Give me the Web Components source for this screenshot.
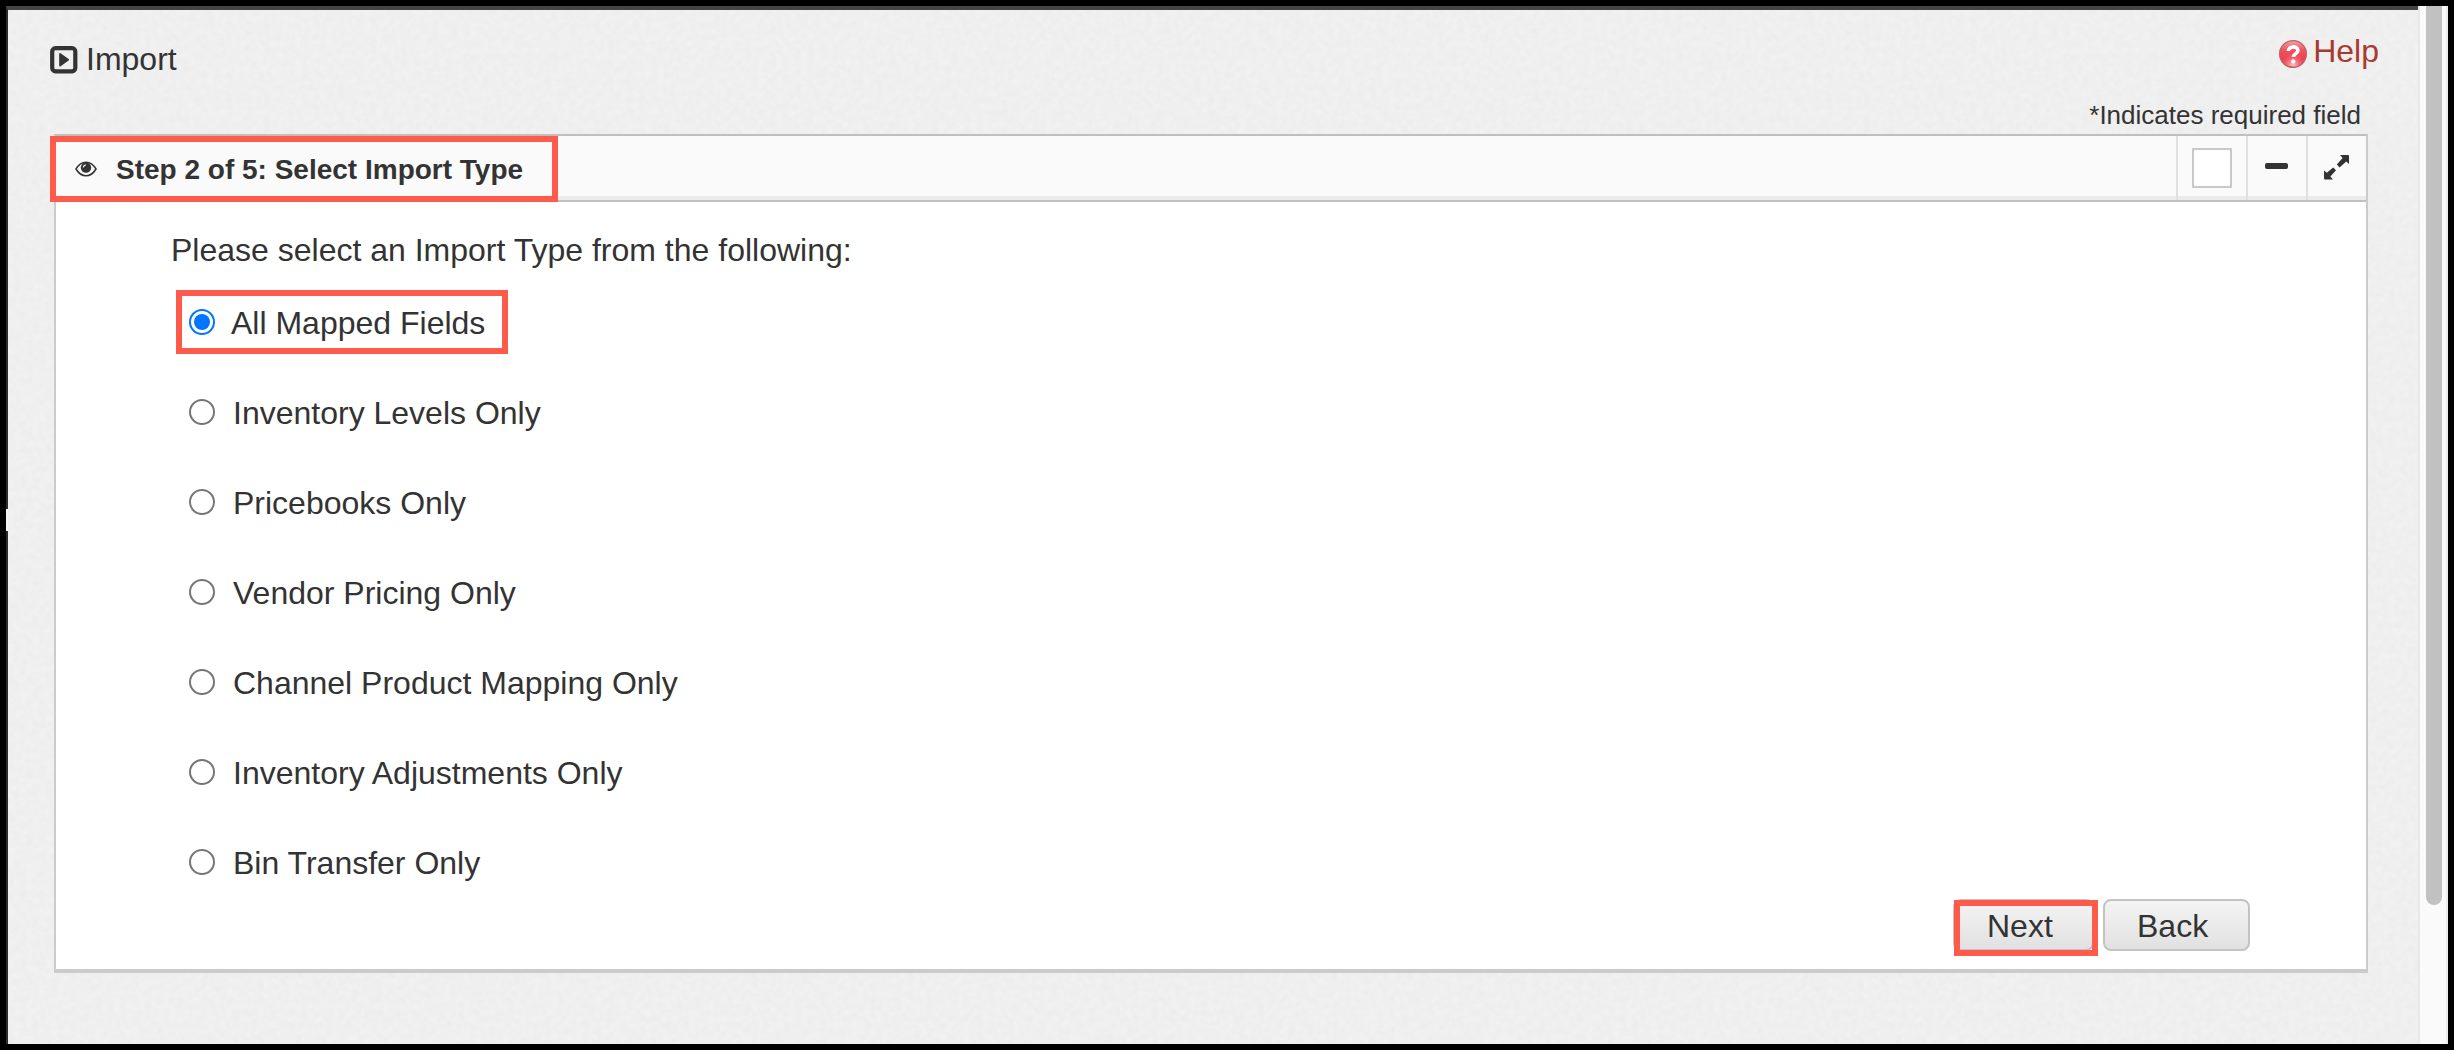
<!DOCTYPE html>
<html lang="en">
<head>
<meta charset="utf-8">
<title>Import</title>
<style>
    *{
        box-sizing:border-box;
    }
    body{
        margin:0;
        width:2454px;
        height:1050px;
        overflow:hidden;
        background:#000;
        font-family:"Liberation Sans", Arial, sans-serif;
        font-size:32px;
        color:#333;
    }
</style>
</head>
<body>
<app-shell>
    <page-heading>Import</page-heading>
    <help-link slot="help">Help</help-link>
    <required-note>*Indicates required field</required-note>
    <step-panel>
        <span slot="title">Step 2 of 5: Select Import Type</span>
        <span slot="intro">Please select an Import Type from the following:</span>
        <radio-option checked>All Mapped Fields</radio-option>
        <radio-option>Inventory Levels Only</radio-option>
        <radio-option>Pricebooks Only</radio-option>
        <radio-option>Vendor Pricing Only</radio-option>
        <radio-option>Channel Product Mapping Only</radio-option>
        <radio-option>Inventory Adjustments Only</radio-option>
        <radio-option>Bin Transfer Only</radio-option>
        <form-button slot="actions" marked>Next</form-button>
        <form-button slot="actions">Back</form-button>
    </step-panel>
</app-shell>

<script>
class BaseElement extends HTMLElement {
    constructor(){
        super();
        this.attachShadow({mode:'open'});
    }
    connectedCallback(){
        const template = document.createElement('template');
        template.innerHTML = `<style>*{box-sizing:border-box;}${this.getStyles()}</style>${this.getTemplate()}`;
        this.shadowRoot.replaceChildren(template.content.cloneNode(true));
    }
}

/* window frame, paper background and scrollbar */
class AppShell extends BaseElement {
    getTemplate(){
        return `
            <div class="page">
                <svg class="paper" width="2410" height="1034">
                    <filter id="grain" x="0" y="0" width="100%" height="100%">
                        <feTurbulence type="fractalNoise" baseFrequency=".16" numOctaves="3" seed="4"/>
                        <feColorMatrix values="0 0 0 0 0  0 0 0 0 0  0 0 0 0 0  .03 0 0 0 -.007"/>
                    </filter>
                    <rect width="2410" height="1034" filter="url(#grain)"/>
                </svg>
                <slot name="help"></slot>
                <slot></slot>
                <i class="notch"></i>
            </div>
            <div class="track"><div class="thumb"></div></div>
        `;
    }
    getStyles(){
        return `
            :host{
                display:flex;
                height:1050px;
                padding:6px;
            }
            .page{
                position:relative;
                z-index:0;
                width:2412px;
                height:1038px;
                border-top:4px solid #454443;
                border-left:2px solid #2e2c2a;
                background:#f1f1f1;
                padding:0 50px 0 46px;
            }
            .paper{
                position:absolute;
                left:0;
                top:0;
                z-index:-1;
            }
            ::slotted(help-link){
                float:right;
                margin:9px -11px 0 0;
            }
            .notch{
                position:absolute;
                left:-2px;
                top:499px;
                width:2px;
                height:22px;
                background:#f4f4f4;
            }
            .track{
                width:30px;
                height:1038px;
                background:#fafafa;
                border-left:2px solid #e8e8e8;
                border-right:2px solid #ededed;
                padding-left:6px;
            }
            .thumb{
                width:16px;
                height:899px;
                background:#c1c1c1;
                border-radius:0 0 8px 8px;
            }
        `;
    }
}

class PageHeading extends BaseElement {
    getTemplate(){
        return `
            <svg width="28" height="28" viewBox="0 0 28 28">
                <rect x="2.2" y="2.2" width="23.1" height="23.1" rx="3.2" fill="none" stroke="#333" stroke-width="4.2"/>
                <path d="M9.2 8.2Q9.2 6.6 10.6 7.3L18.6 13Q19.6 13.8 18.6 14.6L10.6 20.3Q9.2 21 9.2 19.4Z" fill="#333"/>
            </svg>
            <span><slot></slot></span>
        `;
    }
    getStyles(){
        return `
            :host{
                display:flex;
                height:83px;
                padding-top:36px;
            }
            svg{
                margin-left:-4px;
            }
            span{
                margin:-5px 0 0 8px;
                line-height:36px;
            }
        `;
    }
}

class HelpLink extends BaseElement {
    getTemplate(){
        return `
            <svg width="28" height="28" viewBox="0 0 28 28">
                <defs>
                    <linearGradient id="ball" x1="0" y1="0" x2="0" y2="1">
                        <stop offset="0" stop-color="#eea3a9"/>
                        <stop offset=".35" stop-color="#ec5563"/>
                        <stop offset=".7" stop-color="#ee3d4b"/>
                        <stop offset="1" stop-color="#d0525a"/>
                    </linearGradient>
                    <radialGradient id="glow" cx=".5" cy=".95" r=".5">
                        <stop offset="0" stop-color="#ffc3c6"/>
                        <stop offset="1" stop-color="#ff6b76" stop-opacity="0"/>
                    </radialGradient>
                </defs>
                <circle cx="14" cy="14" r="13.4" fill="url(#ball)" stroke="#c25f66" stroke-width="1.2"/>
                <circle cx="14" cy="14" r="12.6" fill="url(#glow)"/>
                <path d="M9.4 11C9.6 5.6 18.9 5.6 18.9 10.4C18.9 13.6 14.6 13.6 14.4 17" fill="none" stroke="#fff" stroke-width="3.6"/>
                <circle cx="14.3" cy="21.4" r="2.2" fill="#fff"/>
            </svg>
            <span><slot></slot></span>
        `;
    }
    getStyles(){
        return `
            :host{
                display:flex;
                height:36px;
                line-height:36px;
                color:#a93a30;
            }
            svg{
                margin-top:21px;
                flex:none;
            }
            span{
                margin:14px 0 0 6px;
            }
        `;
    }
}

class RequiredNote extends BaseElement {
    getTemplate(){
        return `<slot></slot>`;
    }
    getStyles(){
        return `
            :host{
                display:block;
                height:41px;
                padding-right:7px;
                text-align:right;
                font-size:26px;
                line-height:44px;
            }
        `;
    }
}

class StepPanel extends BaseElement {
    getTemplate(){
        return `
            <header>
                <svg width="22" height="16" viewBox="0 0 22 16">
                    <path d="M1 8Q5 1.2 11 1.2T21 8Q17 14.8 11 14.8T1 8Z" fill="none" stroke="#333" stroke-width="1.5"/>
                    <circle cx="11" cy="6.6" r="5.2" fill="#333"/>
                    <path d="M8.4 6.6Q8.4 4 11 4" fill="none" stroke="#fafafa" stroke-width="1.1"/>
                </svg>
                <b><slot name="title"></slot></b>
                <div class="tool check"><i></i></div>
                <div class="tool">
                    <svg width="24" height="6"><rect width="23" height="6" rx="2" fill="#333"/></svg>
                </div>
                <div class="tool last">
                    <svg width="26" height="25" viewBox="0 0 26 25" fill="#333">
                        <path d="M16 0H24Q25 0 25 1V9L22.2 6.6L15.6 12.4L12.8 9.6L18.6 3Z"/>
                        <path d="M9 24.4H1Q0 24.4 0 23.4V15.4L2.8 17.8L9.2 12.4L12 15.2L6.4 21.4Z"/>
                    </svg>
                </div>
                <div class="mark"></div>
            </header>
            <section>
                <p><slot name="intro"></slot></p>
                <slot></slot>
                <footer><slot name="actions"></slot></footer>
            </section>
        `;
    }
    getStyles(){
        return `
            :host{
                display:block;
                width:2314px;
                height:839px;
                background:#fff;
                border:2px solid #cbcbcb;
                border-top-color:#bfbfbf;
                border-bottom-width:4px;
            }
            header{
                position:relative;
                display:flex;
                align-items:center;
                height:66px;
                background:#fafafa;
                border-bottom:2px solid #c0c0c0;
                box-shadow:inset 0 -4px #ebebeb;
            }
            header > svg{
                margin:2px 0 0 19px;
            }
            b{
                margin-left:19px;
                padding-top:3px;
                font-size:28px;
                line-height:32px;
                flex:1;
            }
            .tool{
                display:flex;
                align-items:center;
                justify-content:center;
                width:60px;
                height:64px;
                padding-bottom:4px;
                border-left:2px solid #e0e0e0;
            }
            .check{
                width:70px;
            }
            .check i{
                width:40px;
                height:40px;
                margin-top:4px;
                background:#fff;
                border:2px solid #c8c8c8;
            }
            .last{
                padding-bottom:2px;
            }
            .mark{
                position:absolute;
                left:-6px;
                top:0;
                width:508px;
                height:66px;
                border:6px solid #ff5b4d;
            }
            section{
                height:767px;
                padding:30px 116px 0 114px;
            }
            p{
                margin:0 0 36px 1px;
                line-height:36px;
            }
            footer{
                display:flex;
                justify-content:flex-end;
                gap:9px;
                margin-top:-35px;
            }
        `;
    }
}

class RadioOption extends BaseElement {
    getTemplate(){
        const checked = this.hasAttribute('checked');
        return `
            <svg width="26" height="26" viewBox="0 0 26 26">
                <circle cx="13" cy="13" r="12" fill="#fff" stroke="${checked ? '#0075ff' : '#767676'}" stroke-width="2"/>
                ${checked ? '<circle cx="13" cy="13" r="8" fill="#0075ff"/>' : ''}
            </svg>
            <span><slot></slot></span>
            ${checked ? '<div class="mark"></div>' : ''}
        `;
    }
    getStyles(){
        return `
            :host{
                position:relative;
                display:flex;
                align-items:center;
                height:36px;
                margin-bottom:54px;
                padding-left:19px;
            }
            span{
                line-height:36px;
                margin-left:18px;
                padding-top:2px;
            }
            :host([checked]) span{
                margin-left:16px;
            }
            .mark{
                position:absolute;
                left:6px;
                top:-14px;
                width:332px;
                height:64px;
                border:6px solid #ff5b4d;
            }
        `;
    }
}

class FormButton extends BaseElement {
    getTemplate(){
        return `
            <button type="button"><slot></slot></button>
            ${this.hasAttribute('marked') ? '<div class="mark"></div>' : ''}
        `;
    }
    getStyles(){
        return `
            :host{
                position:relative;
                display:block;
            }
            button{
                display:block;
                width:147px;
                height:52px;
                padding:3px 0 0 32px;
                font:inherit;
                line-height:45px;
                text-align:left;
                color:#333;
                background:linear-gradient(#f4f4f4, #e1e1e1);
                border:2px solid #c3c3c3;
                border-radius:8px;
            }
            :host([marked]) button{
                width:141px;
            }
            .mark{
                position:absolute;
                left:1px;
                top:1px;
                width:144px;
                height:56px;
                border:6px solid #ff5b4d;
            }
        `;
    }
}

customElements.define('app-shell', AppShell);
customElements.define('page-heading', PageHeading);
customElements.define('help-link', HelpLink);
customElements.define('required-note', RequiredNote);
customElements.define('step-panel', StepPanel);
customElements.define('radio-option', RadioOption);
customElements.define('form-button', FormButton);
</script>
</body>
</html>
